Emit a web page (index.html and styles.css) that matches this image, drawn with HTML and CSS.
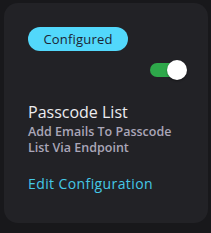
FILE: index.html
```html
<!DOCTYPE html>
<html>
<head>
<meta charset="utf-8">
<link rel="stylesheet" href="styles.css">
</head>
<body>
<div class="card">
  <span class="badge">Configured</span>
  <div class="toggle-row">
    <div class="toggle"><span class="knob"></span></div>
  </div>
  <div class="title">Passcode List</div>
  <div class="desc">Add Emails To Passcode List Via Endpoint</div>
  <a class="edit">Edit Configuration</a>
</div>
</body>
</html>
```
FILE: styles.css
```css
html, body {
  margin: 0;
  background: #18181b;
}
body {
  padding: 3px 0 0 4px;
  font-family: "Open Sans", "DejaVu Sans", sans-serif;
}
.card {
  box-sizing: border-box;
  width: 204px;
  height: 220px;
  background: #222226;
  border-radius: 14px;
  padding: 24px 21px 0 24px;
  display: flex;
  flex-direction: column;
  align-items: flex-start;
}
.badge {
  box-sizing: border-box;
  width: 100px;
  height: 24px;
  border-radius: 12px;
  background: #52d8fb;
  color: #1b2533;
  font-size: 13px;
  letter-spacing: 0.2px;
  line-height: 24px;
  text-align: center;
}
.toggle-row {
  align-self: stretch;
  display: flex;
  justify-content: flex-end;
  margin-top: 9px;
}
.toggle {
  position: relative;
  width: 37px;
  height: 20px;
}
.toggle::before {
  content: "";
  position: absolute;
  left: 0;
  top: 3px;
  width: 34px;
  height: 14px;
  border-radius: 7px;
  background: #2ea84a;
}
.knob {
  position: absolute;
  right: 0;
  top: 0;
  width: 20px;
  height: 20px;
  border-radius: 50%;
  background: #ffffff;
  box-shadow: 0 1px 2px rgba(0,0,0,0.4);
}
.title {
  margin-top: 22px;
  color: #ececf0;
  font-size: 16px;
  line-height: 20px;
}
.desc {
  margin-top: 2px;
  color: #aaa6b8;
  font-size: 12.5px;
  font-weight: 600;
  line-height: 16px;
  width: 160px;
}
.edit {
  margin-top: 19px;
  color: #45c8e6;
  font-size: 14px;
  letter-spacing: 0.4px;
  line-height: 18px;
}
```
